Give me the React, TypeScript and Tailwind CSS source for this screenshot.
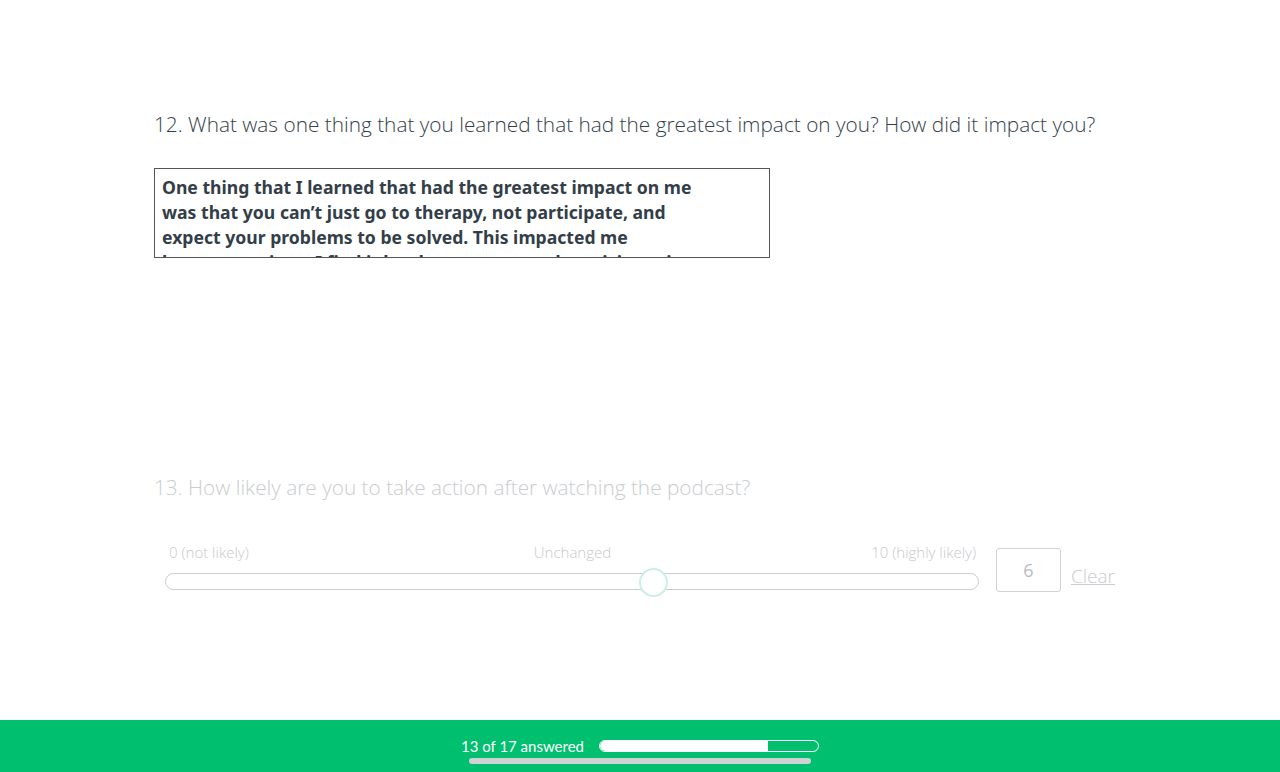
import React from "react";

export default function App() {
  return (
    <div className="w-[1280px] h-[772px] bg-white flex flex-col overflow-hidden" style={{ fontFamily: "'Open Sans', sans-serif" }}>
      <div className="flex-1 pl-[154px] pt-[110px]">
        <h2 className="text-[20.8px] leading-[28px] font-light text-[#333e48]">
          12. What was one thing that you learned that had the greatest impact on you? How did it impact you?
        </h2>
        <div className="mt-[30px] w-[616px] h-[90px] border border-[#555] overflow-hidden px-[7px] pt-[6px]">
          <p className="text-[17.6px] leading-[25px] font-bold text-[#333e48] w-[540px]" style={{ fontFamily: "'Noto Sans', sans-serif" }}>
            One thing that I learned that had the greatest impact on me was that you can’t just go to therapy, not participate, and expect your problems to be solved. This impacted me because at times I find it hard to open up and participate in things like that
          </p>
        </div>
        <h2 className="mt-[215px] text-[20.8px] leading-[28px] font-light text-[#c9cccf]">
          13. How likely are you to take action after watching the podcast?
        </h2>
        <div className="mt-[41px] flex items-start pl-[11px]">
          <div className="w-[814px]">
            <div className="grid grid-cols-3 text-[15px] leading-[20px] text-[#c6c9cc] font-light px-[4px] pr-[3px]">
              <span>0 (not likely)</span>
              <span className="text-center">Unchanged</span>
              <span className="text-right">10 (highly likely)</span>
            </div>
            <div className="relative mt-[11px] h-[17px] border border-[#c9cccf] rounded-full">
              <div className="absolute left-[473px] top-[-6px] w-[29px] h-[29px] rounded-full border-2 border-[#cdeee3] bg-white" />
            </div>
          </div>
          <div className="ml-[17px] mt-[6px] flex items-end">
            <div className="w-[65px] h-[44px] border border-[#d0d3d5] rounded-[3px] flex items-center justify-center text-[18px] text-[#b8bcbf]">
              6
            </div>
            <a className="ml-[10px] mb-[2px] text-[19px] text-[#c9cccf] underline font-light">Clear</a>
          </div>
        </div>
      </div>
      <div className="h-[52px] bg-[#00bf6f] flex flex-col items-center pt-[16px]">
        <div className="flex items-center">
          <span className="text-[15px] leading-[20px] text-white" style={{ fontFamily: "Lato, sans-serif" }}>13 of 17 answered</span>
          <div className="ml-[15px] w-[220px] h-[12px] border border-white rounded-full overflow-hidden">
            <div className="h-full w-[168px] bg-white rounded-l-full" />
          </div>
        </div>
        <div className="mt-[2px] w-[342px] h-[6px] bg-[#cfd2d4] rounded-full" />
      </div>
    </div>
  );
}
